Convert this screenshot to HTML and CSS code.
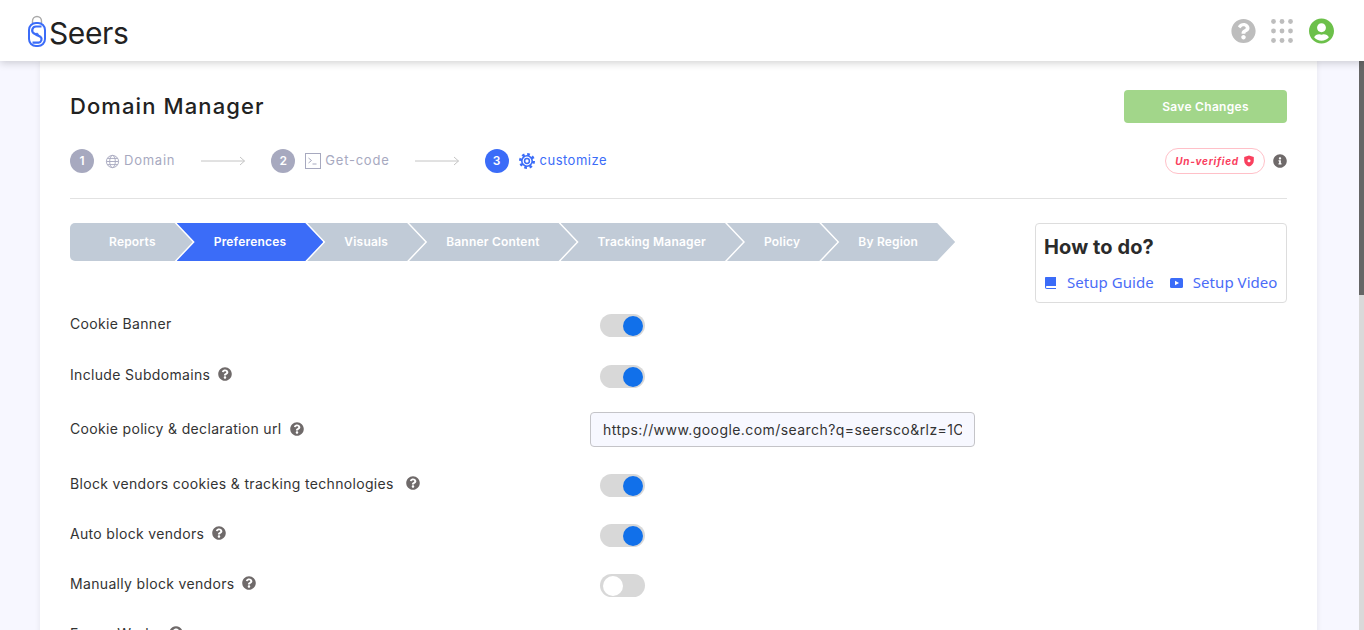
FILE: index.html
```html
<!DOCTYPE html>
<html lang="en">
<head>
    <meta charset="UTF-8">
    <meta name="viewport" content="width=device-width, initial-scale=1.0">
    <title>Domain Manager</title>
    <link rel="stylesheet" href="styles.css">
</head>
<body>
    <svg class="icon-defs" aria-hidden="true">
        <symbol id="i-question" viewBox="0 0 512 512"><path fill="currentColor" d="M504 256c0 136.997-111.043 248-248 248S8 392.997 8 256C8 119.083 119.043 8 256 8s248 111.083 248 248zM262.655 90c-54.497 0-89.255 22.957-116.549 63.758-3.536 5.286-2.353 12.415 2.715 16.258l34.699 26.31c5.205 3.947 12.621 3.008 16.665-2.122 17.864-22.658 30.113-35.797 57.303-35.797 20.429 0 45.698 13.148 45.698 32.958 0 14.976-12.363 22.667-32.534 33.976C247.128 238.528 216 254.941 216 296v4c0 6.627 5.373 12 12 12h56c6.627 0 12-5.373 12-12v-1.333c0-28.462 83.186-29.647 83.186-106.667 0-58.002-60.165-102-116.531-102zM256 338c-25.365 0-46 20.635-46 46 0 25.364 20.635 46 46 46s46-20.636 46-46c0-25.365-20.635-46-46-46z"/></symbol>
    </svg>

    <header class="topbar">
        <a class="logo">
            <svg class="logo-mark" viewBox="0 0 18 32" fill="none">
                <path d="M4.5 8V6a4.5 4.5 0 0 1 9 0v2" stroke="#a9a9a9" stroke-width="1.4"/>
                <rect x="1" y="8" width="16" height="23" rx="7" stroke="#3b6cf8" stroke-width="2"/>
                <path d="M13.500 11.500H8a3.800 3.800 0 0 0-2.300 6.800l6.600 3.400a3.400 3.400 0 0 1-1.800 6H4.500" stroke="#3b6cf8" stroke-width="2.200"/>
                <circle cx="9" cy="19.500" r="1.300" stroke="#3b6cf8"/>
            </svg>
            <span class="logo-text">Seers</span>
        </a>
        <div class="topbar-icons">
            <svg class="top-help"><use href="#i-question"/></svg>
            <svg class="top-apps" viewBox="0 0 22 24">
                <g fill="#bdbdbd">
                    <circle cx="2.500" cy="2.500" r="2.400"/><circle cx="11" cy="2.500" r="2.400"/><circle cx="19.500" cy="2.500" r="2.400"/>
                    <circle cx="2.500" cy="12" r="2.400"/><circle cx="11" cy="12" r="2.400"/><circle cx="19.500" cy="12" r="2.400"/>
                    <circle cx="2.500" cy="21.500" r="2.400"/><circle cx="11" cy="21.500" r="2.400"/><circle cx="19.500" cy="21.500" r="2.400"/>
                </g>
            </svg>
            <svg class="top-user" viewBox="0 0 496 512"><path fill="#6cc04a" d="M248 8C111 8 0 119 0 256s111 248 248 248 248-111 248-248S385 8 248 8zm0 96c48.6 0 88 39.4 88 88s-39.4 88-88 88-88-39.4-88-88 39.4-88 88-88zm0 344c-58.7 0-111.3-26.6-146.5-68.2 18.8-35.4 55.6-59.8 98.5-59.8 2.4 0 4.8.4 7.1 1.1 13 4.2 26.6 6.9 40.9 6.9 14.3 0 28-2.7 40.9-6.9 2.3-.7 4.7-1.1 7.1-1.1 42.9 0 79.7 24.4 98.5 59.8C359.3 421.4 306.7 448 248 448z"/></svg>
        </div>
    </header>

    <main class="card">
        <div class="title-row">
            <h1 class="page-title">Domain Manager</h1>
            <button class="save-button">Save Changes</button>
        </div>

        <div class="stepper-row">
            <div class="stepper">
                <div class="step">
                    <span class="step-num">1</span>
                    <svg class="step-icon" viewBox="0 0 16 16" fill="none" stroke="currentColor" stroke-width="1">
                        <circle cx="8" cy="8" r="6.500"/>
                        <ellipse cx="8" cy="8" rx="3" ry="6.500"/>
                        <path d="M1.500 8h13M2.500 4.700h11M2.500 11.300h11"/>
                    </svg>
                    <span>Domain</span>
                </div>
                <svg class="step-arrow" viewBox="0 0 44 10" fill="none" stroke="#c4c4c4"><path d="M0 5h43.500M39 1l4.500 4-4.500 4"/></svg>
                <div class="step">
                    <span class="step-num">2</span>
                    <svg class="step-icon step-icon-term" viewBox="0 0 16 16" fill="none" stroke="currentColor" stroke-width="1">
                        <rect x="0.500" y="0.500" width="15" height="15"/>
                        <path d="M3.500 5l3 2.500-3 2.500M7.500 11h4"/>
                    </svg>
                    <span>Get-code</span>
                </div>
                <svg class="step-arrow step-arrow-b" viewBox="0 0 44 10" fill="none" stroke="#c4c4c4"><path d="M0 5h43.500M39 1l4.500 4-4.500 4"/></svg>
                <div class="step step-active">
                    <span class="step-num">3</span>
                    <svg class="step-icon step-icon-gear" viewBox="0 0 16 16" fill="none" stroke="currentColor">
                        <circle cx="8" cy="8" r="6.600" stroke-width="2.800" stroke-dasharray="2.590 2.590"/>
                        <circle cx="8" cy="8" r="5.200" stroke-width="1.600"/>
                        <circle cx="8" cy="8" r="2.400" stroke-width="1.500"/>
                    </svg>
                    <span>customize</span>
                </div>
            </div>
            <div class="status">
                <span class="badge">
                    Un-verified
                    <svg class="badge-shield" viewBox="0 0 12 12"><path fill="#f9405e" d="M6 .5l4.800 1.600v3.700c0 2.800-2 4.900-4.800 5.800-2.800-.9-4.800-3-4.800-5.800V2.100z"/><circle cx="6" cy="5.800" r="1.500" fill="#fff"/></svg>
                </span>
                <svg class="status-info" viewBox="0 0 512 512"><path fill="#6f6a6a" d="M256 8C119.043 8 8 119.083 8 256c0 136.997 111.043 248 248 248s248-111.003 248-248C504 119.083 392.957 8 256 8zm0 110c23.196 0 42 18.804 42 42s-18.804 42-42 42-42-18.804-42-42 18.804-42 42-42zm56 254c0 6.627-5.373 12-12 12h-88c-6.627 0-12-5.373-12-12v-24c0-6.627 5.373-12 12-12h12v-64h-12c-6.627 0-12-5.373-12-12v-24c0-6.627 5.373-12 12-12h64c6.627 0 12 5.373 12 12v100h12c6.627 0 12 5.373 12 12v24z"/></svg>
            </div>
        </div>

        <hr class="divider">

        <div class="content">
            <div class="content-main">
                <nav class="tabs">
                    <a class="tab tab-first">Reports</a>
                    <a class="tab tab-active">Preferences</a>
                    <a class="tab">Visuals</a>
                    <a class="tab">Banner Content</a>
                    <a class="tab">Tracking Manager</a>
                    <a class="tab">Policy</a>
                    <a class="tab">By Region</a>
                </nav>

                <div class="prefs">
                    <div class="pref-row">
                        <label class="pref-label">Cookie Banner</label>
                        <span class="toggle toggle-on"></span>
                    </div>
                    <div class="pref-row">
                        <label class="pref-label">Include Subdomains <svg class="help"><use href="#i-question"/></svg></label>
                        <span class="toggle toggle-on"></span>
                    </div>
                    <div class="pref-row pref-row-input">
                        <label class="pref-label">Cookie policy &amp; declaration url <svg class="help"><use href="#i-question"/></svg></label>
                        <input class="url-input" type="text" value="https://www.google.com/search?q=seersco&amp;rlz=1C">
                    </div>
                    <div class="pref-row">
                        <label class="pref-label">Block vendors cookies &amp; tracking technologies <svg class="help help-wide"><use href="#i-question"/></svg></label>
                        <span class="toggle toggle-on"></span>
                    </div>
                    <div class="pref-row">
                        <label class="pref-label">Auto block vendors <svg class="help"><use href="#i-question"/></svg></label>
                        <span class="toggle toggle-on"></span>
                    </div>
                    <div class="pref-row">
                        <label class="pref-label">Manually block vendors <svg class="help"><use href="#i-question"/></svg></label>
                        <span class="toggle"></span>
                    </div>
                    <div class="pref-row">
                        <label class="pref-label">Frame Works <svg class="help"><use href="#i-question"/></svg></label>
                    </div>
                </div>
            </div>

            <aside class="howto">
                <h2 class="howto-title">How to do?</h2>
                <div class="howto-links">
                    <a class="howto-link">
                        <svg class="howto-icon" viewBox="0 0 12 12"><path fill="#3b6cf8" d="M1.500 0H11.500V9H2.500C1.900 9 1.500 9.400 1.500 10s.4 1 1 1h9v1h-9C1.100 12 .5 11.300 .5 10V1C.5.400 .9 0 1.500 0z"/></svg>
                        Setup Guide
                    </a>
                    <a class="howto-link">
                        <svg class="howto-icon" viewBox="0 0 13 12"><rect y="1" width="13" height="10" rx="1.500" fill="#3b6cf8"/><path fill="#fff" d="M5 3.700l4 2.300-4 2.300z"/></svg>
                        Setup Video
                    </a>
                </div>
            </aside>
        </div>
    </main>

    <div class="scrollbar"><div class="scrollbar-thumb"></div></div>
</body>
</html>
```

FILE: styles.css
```css
* {
    box-sizing: border-box;
}
html, body {
    height: 100%;
}
body {
    font-family: Inter, 'Open Sans', sans-serif;
    background-color: #f7f7ff;
    color: #333;
    margin: 0;
    padding: 0;
    overflow: hidden;
    position: relative;
}
.icon-defs {
    display: none;
}

/* top bar */
.topbar {
    height: 61px;
    background-color: #fff;
    box-shadow: 0 2px 8px rgba(0, 0, 0, 0.18);
    display: flex;
    justify-content: space-between;
    align-items: center;
    padding: 0 30px 0 28px;
    position: relative;
    z-index: 10;
}
.logo {
    display: flex;
    align-items: center;
    gap: 3px;
}
.logo-mark {
    width: 18px;
    height: 32px;
}
.logo-text {
    font-size: 30px;
    color: #222;
    letter-spacing: -0.4px;
    line-height: 36px;
    margin-top: 4px;
}
.topbar-icons {
    display: flex;
    align-items: center;
}
.top-help {
    width: 25px;
    height: 26px;
    color: #bdbdbd;
}
.top-apps {
    width: 22px;
    height: 24px;
    margin-left: 15px;
}
.top-user {
    width: 25px;
    height: 26px;
    margin-left: 16px;
}

/* main card */
.card {
    margin: 0 47px 0 40px;
    height: 1384px;
    background-color: #fff;
    box-shadow: 0 0 6px rgba(0, 0, 0, 0.08);
    padding: 29px 30px 0;
}
.title-row {
    display: flex;
    justify-content: space-between;
    align-items: center;
}
.page-title {
    margin: 0 0 2px;
    font-size: 22px;
    font-weight: 500;
    color: #222;
    letter-spacing: 1.1px;
}
.save-button {
    width: 163px;
    height: 33px;
    border: none;
    border-radius: 4px;
    background-color: #a2d68a;
    color: #fff;
    font-family: inherit;
    font-size: 12px;
    font-weight: 600;
    letter-spacing: 0.3px;
}

/* stepper */
.stepper-row {
    display: flex;
    justify-content: space-between;
    align-items: center;
    margin-top: 25px;
    height: 26px;
}
.stepper {
    display: flex;
    align-items: center;
    gap: 26px;
}
.step {
    display: flex;
    align-items: center;
    font-size: 13px;
    line-height: 16px;
    color: #a7a9bf;
    letter-spacing: 0.77px;
}
.step > span:last-child {
    margin-bottom: 2px;
}
.step-num {
    width: 24px;
    height: 24px;
    border-radius: 50%;
    background-color: #a7a9bf;
    color: #fff;
    font-size: 12px;
    font-weight: 600;
    display: flex;
    justify-content: center;
    align-items: center;
    margin-right: 11px;
    letter-spacing: 0;
}
.step-icon {
    width: 15px;
    height: 15px;
    margin-right: 4px;
}
.step-icon-term {
    width: 16px;
    height: 16px;
    margin-left: -1px;
    margin-right: 4px;
}
.step-icon-gear {
    width: 16px;
    height: 16px;
    margin-left: -1px;
    margin-right: 5px;
}
.step-active {
    color: #3b6cf8;
    letter-spacing: 0.5px;
}
.step-active .step-num {
    background-color: #3b6cf8;
}
.step-arrow {
    width: 44px;
    height: 10px;
}
.step-arrow-b {
    margin-left: -1px;
}
.status {
    display: flex;
    align-items: center;
    gap: 8px;
}
.badge {
    height: 26px;
    width: 100px;
    border: 1px solid #ffc0c8;
    border-radius: 13px;
    color: #f9405e;
    font-size: 10px;
    font-weight: 700;
    font-style: italic;
    letter-spacing: 0.7px;
    display: flex;
    justify-content: center;
    align-items: center;
    gap: 4px;
}
.badge-shield {
    width: 12px;
    height: 12px;
}
.status-info {
    width: 14px;
    height: 14px;
}
.divider {
    border: none;
    border-top: 1px solid #e2e2e2;
    margin: 24px 0;
}

/* tabs + prefs */
.content {
    display: flex;
    justify-content: space-between;
    align-items: flex-start;
}
.content-main {
    flex: 1;
}
.tabs {
    display: flex;
}
.tab {
    height: 38px;
    padding: 0 37px 2px;
    margin-left: -16px;
    background-color: #c1cbd7;
    color: #fff;
    font-size: 12px;
    font-weight: 600;
    letter-spacing: 0.2px;
    display: flex;
    align-items: center;
    white-space: nowrap;
    clip-path: polygon(0 0, calc(100% - 18px) 0, 100% 50%, calc(100% - 18px) 100%, 0 100%, 18px 50%);
}
.tab-first {
    margin-left: 0;
    padding-left: 39px;
    border-radius: 5px 0 0 5px;
    clip-path: polygon(0 0, calc(100% - 18px) 0, 100% 50%, calc(100% - 18px) 100%, 0 100%);
}
.tab-active {
    background-color: #3b6cf8;
}
.prefs {
    margin-top: 53px;
}
.pref-row {
    display: flex;
    align-items: center;
    min-height: 23px;
    margin-top: 27px;
}
.pref-row:first-child {
    margin-top: 0;
}
.pref-row:nth-child(2) {
    margin-top: 28px;
}
.pref-row-input {
    margin-top: 24px;
}
.pref-label {
    width: 520px;
    font-size: 14px;
    color: #333;
    letter-spacing: 0.33px;
    padding-bottom: 5px;
    display: flex;
    align-items: center;
    gap: 8px;
}
.pref-row-input .pref-label {
    padding-bottom: 2px;
}
.help {
    width: 14px;
    height: 14px;
    color: #6f6a6a;
}
.help-wide {
    margin-left: 4px;
}
.toggle {
    width: 45px;
    height: 23px;
    margin-left: 10px;
    border-radius: 12px;
    background-color: #d8d8d8;
    position: relative;
}
.toggle::after {
    content: "";
    position: absolute;
    top: 1.5px;
    left: 3px;
    width: 20px;
    height: 20px;
    border-radius: 50%;
    background-color: #fff;
}
.toggle-on::after {
    left: 22.5px;
    background-color: #1170ea;
}
.url-input {
    width: 385px;
    height: 35px;
    padding: 0 12px;
    border: 1px solid #c4c4c8;
    border-radius: 4px;
    background-color: #f7f8ff;
    color: #333;
    font-family: inherit;
    font-size: 14px;
    letter-spacing: 0.43px;
    outline: none;
}

/* how to box */
.howto {
    width: 252px;
    height: 80px;
    border: 1px solid #ddd;
    border-radius: 4px;
    padding: 9px 8px 0;
}
.howto-title {
    margin: 0;
    font-size: 20px;
    font-weight: 700;
    letter-spacing: 0.1px;
    line-height: 28px;
    color: #2b2b2b;
}
.howto-links {
    display: flex;
    gap: 16px;
    margin-top: 11px;
}
.howto-link {
    display: flex;
    align-items: center;
    gap: 10px;
    font-family: 'Noto Sans', sans-serif;
    font-size: 15px;
    letter-spacing: 0.05px;
    line-height: 20px;
    color: #4a6cf7;
    white-space: nowrap;
}
.howto-icon {
    width: 13px;
    height: 12px;
    margin-top: 2px;
}

/* the page's thin scrollbar, lying over the right edge */
.scrollbar {
    position: absolute;
    top: 61px;
    right: 0;
    bottom: 0;
    width: 5px;
    background-color: #d9d9d9;
}
.scrollbar-thumb {
    height: 234px;
    background-color: #666;
}
```
